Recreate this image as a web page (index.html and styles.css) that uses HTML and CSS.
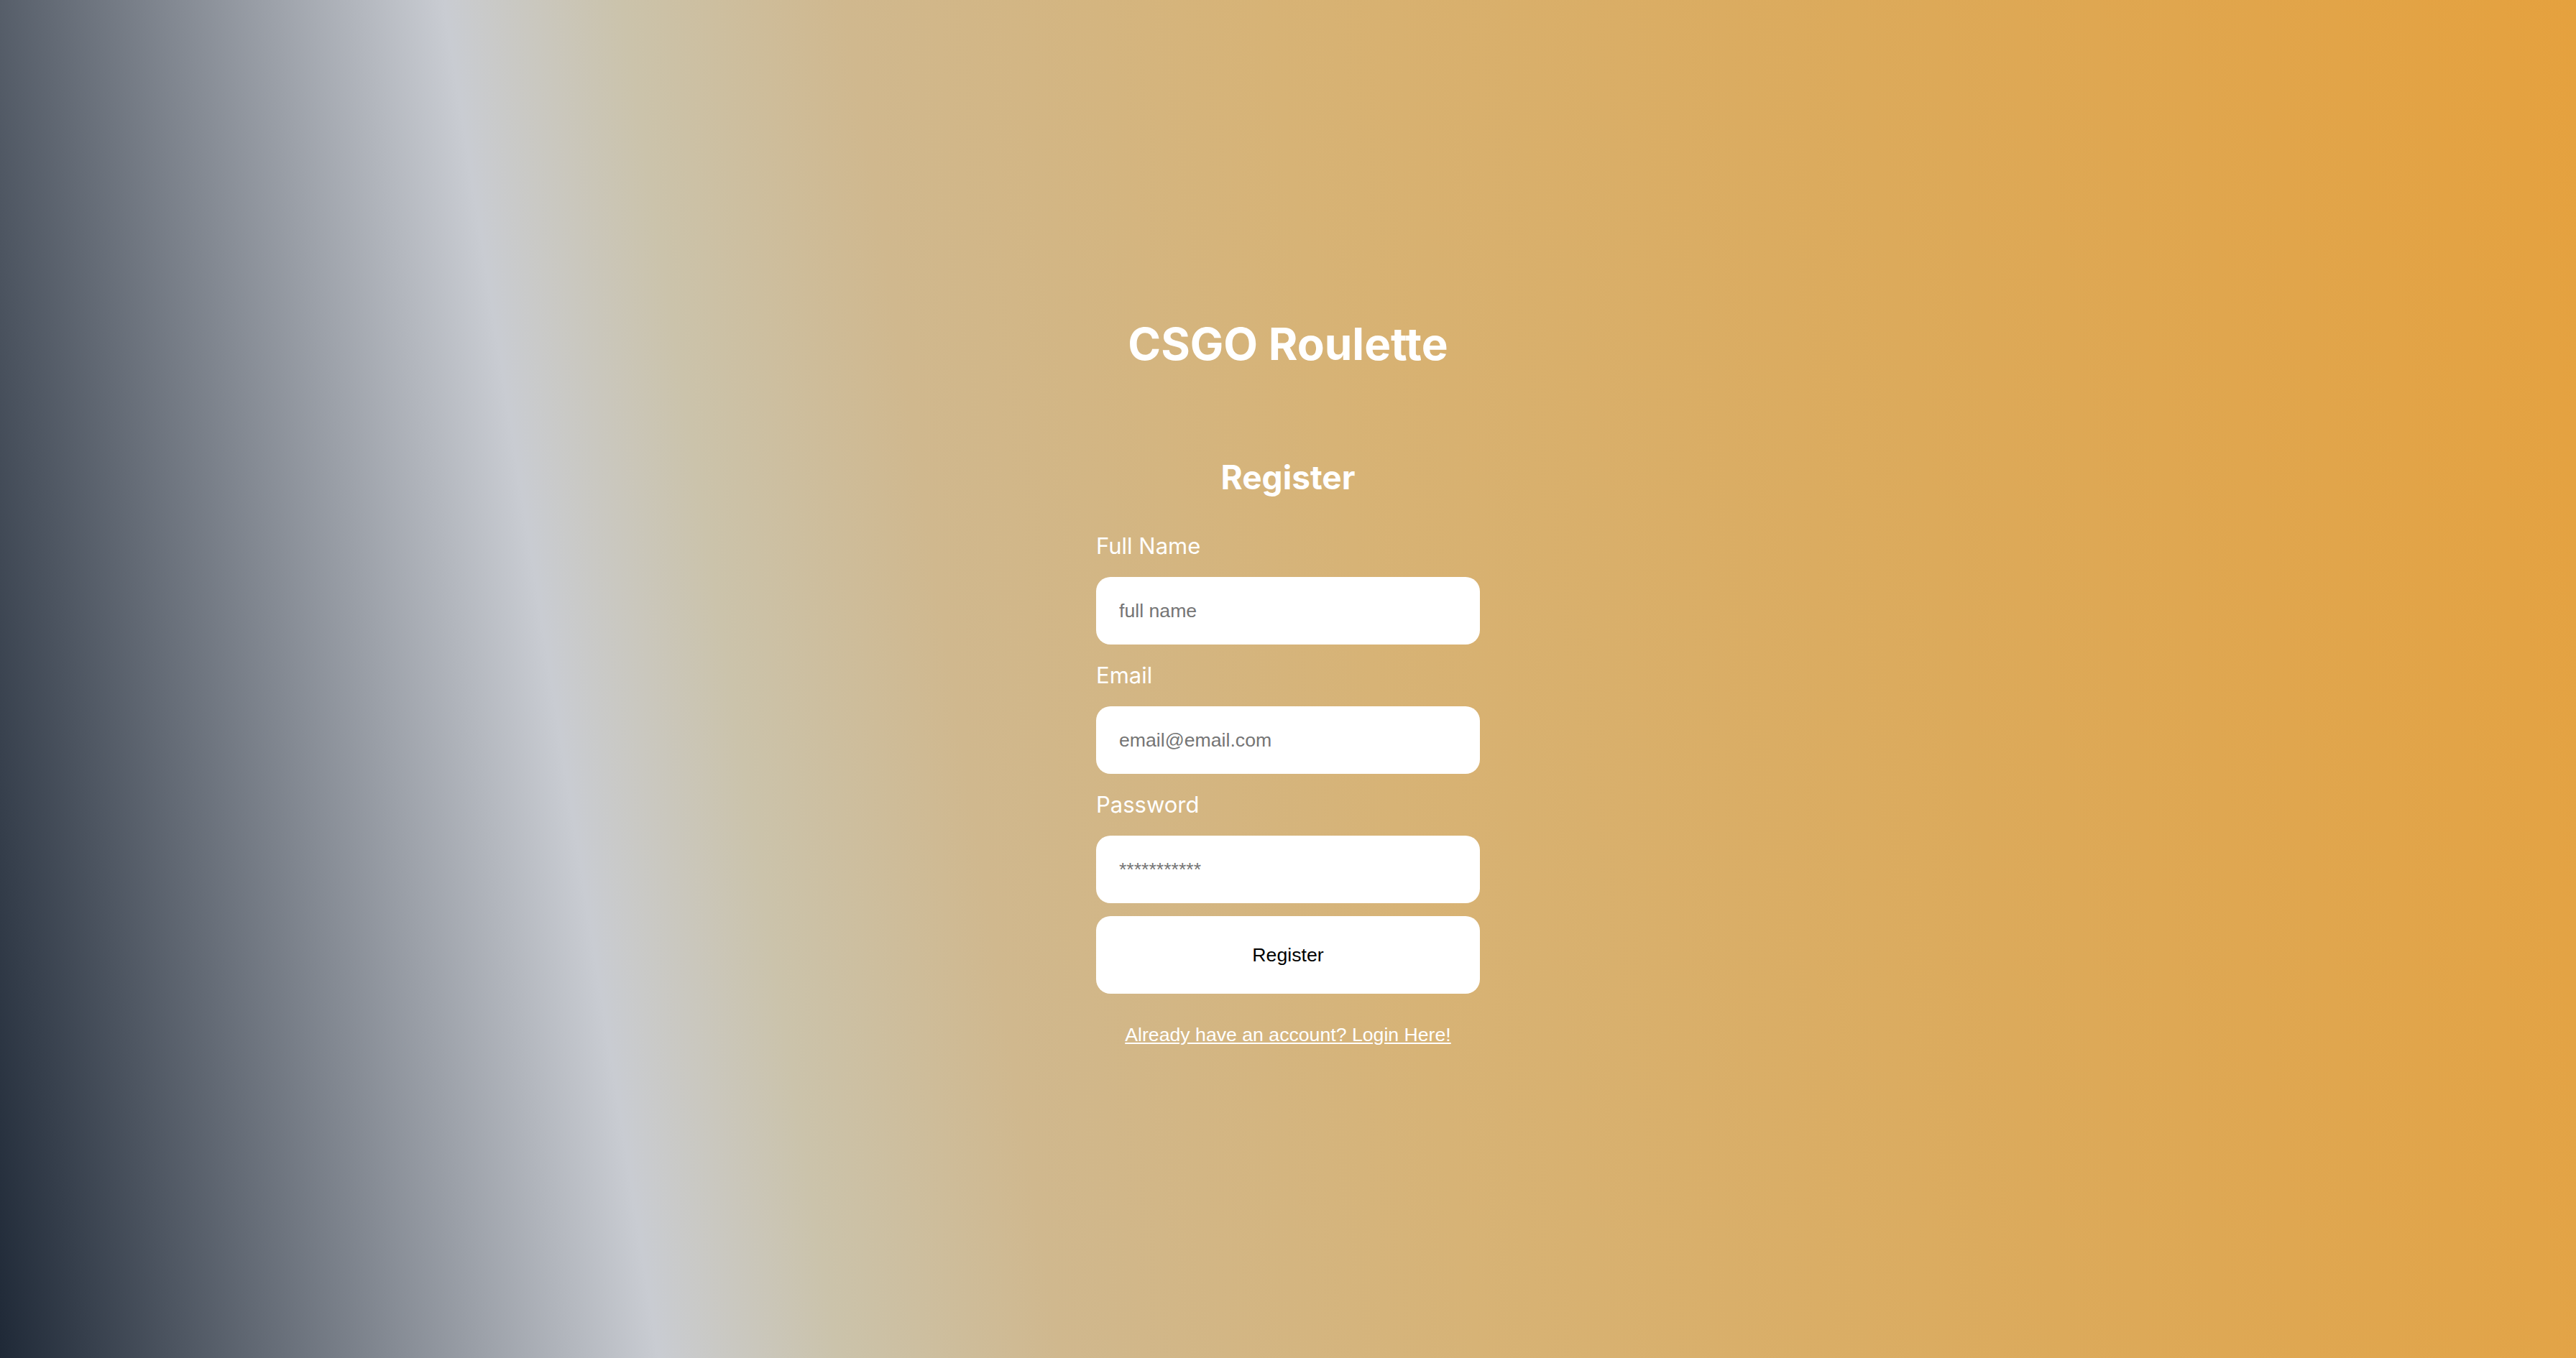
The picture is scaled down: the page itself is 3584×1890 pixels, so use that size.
FILE: index.html
```html
<!DOCTYPE html>
<html lang="en">
<head>
<meta charset="utf-8">
<title>CSGO Roulette - Register</title>
<link rel="stylesheet" href="styles.css">
</head>
<body>
<main class="page">
  <div class="content">
    <h1 class="title">CSGO Roulette</h1>
    <form class="form">
      <h2 class="form-heading">Register</h2>
      <label class="label" for="name">Full Name</label>
      <input class="input" id="name" type="text" placeholder="full name">
      <label class="label" for="email">Email</label>
      <input class="input" id="email" type="email" placeholder="email@email.com">
      <label class="label" for="password">Password</label>
      <input class="input" id="password" type="password" placeholder="***********">
      <button class="button" type="button">Register</button>
      <a class="link" href="#">Already have an account? Login Here!</a>
    </form>
  </div>
</main>
</body>
</html>
```

FILE: styles.css
```css
* { box-sizing: border-box; }

html, body {
  margin: 0;
  padding: 0;
  height: 100%;
}

body {
  font-family: Inter, "Noto Sans", sans-serif;
  color: #ffffff;
}

.page {
  min-height: 100vh;
  display: flex;
  align-items: center;
  justify-content: center;
  padding-top: 5px;
  background: linear-gradient(81deg,
    #1f2937 0%,
    #c9ccd2 23.6%,
    #cbc3ab 30%,
    #d0b88e 38%,
    #d7b376 53%,
    #dcaa5b 74%,
    #e5a13e 100%);
}

.content {
  display: flex;
  flex-direction: column;
  align-items: center;
  width: 534px;
}

.title {
  margin: 0;
  font-size: 62px;
  line-height: 80px;
  font-weight: 700;
  letter-spacing: 0;
}

.form {
  width: 100%;
  display: flex;
  flex-direction: column;
  margin-top: 113px;
}

.form-heading {
  margin: 0 0 21px;
  text-align: center;
  font-size: 46px;
  line-height: 64px;
  font-weight: 700;
}

.label {
  display: block;
  margin-top: 23px;
  margin-bottom: 23px;
  font-size: 31px;
  line-height: 40px;
  font-weight: 400;
}

.input {
  height: 94px;
  width: 100%;
  border: none;
  border-radius: 20px;
  padding: 0 32px;
  background: #ffffff;
  font-family: "Liberation Sans", Arial, sans-serif;
  font-size: 26.67px;
  color: #000;
  outline: none;
}

.input::placeholder {
  color: #757575;
  opacity: 1;
}

.button {
  margin-top: 18px;
  height: 108px;
  width: 100%;
  border: none;
  border-radius: 20px;
  background: #ffffff;
  color: #000000;
  font-family: "Liberation Sans", Arial, sans-serif;
  font-size: 26.67px;
  cursor: pointer;
}

.link {
  margin-top: 41px;
  align-self: center;
  color: #ffffff;
  font-family: "Liberation Sans", Arial, sans-serif;
  font-size: 26.67px;
  line-height: 32px;
  text-decoration: underline;
}
```
